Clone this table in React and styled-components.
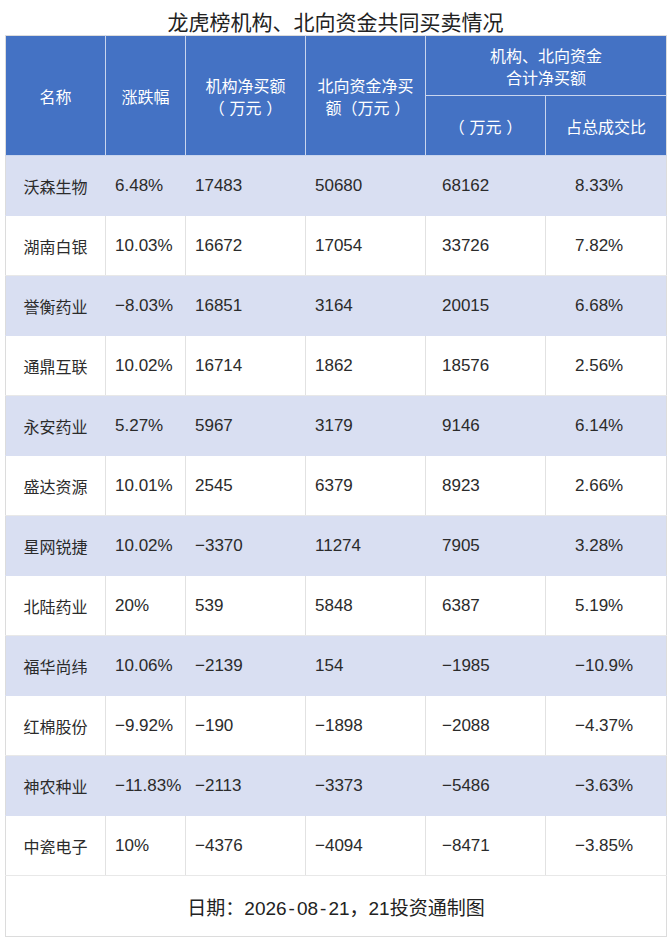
import React from "react";
import styled, { createGlobalStyle } from "styled-components";

const GlobalStyle = createGlobalStyle`
  html, body {
    margin: 0;
    padding: 0;
    background: #ffffff;
  }
  body {
    font-family: "Liberation Sans", "Noto Sans CJK SC", sans-serif;
    color: #2b2b2b;
  }
`;

const Page = styled.div`
  width: 670px;
  height: 940px;
  padding: 0 4px 0 5px;
  box-sizing: border-box;
  background: #fff;
`;

const Title = styled.h1`
  margin: 0;
  height: 35px;
  line-height: 42px;
  text-align: center;
  font-size: 21px;
  font-weight: normal;
  color: #222;
  font-family: "Noto Sans CJK SC", sans-serif;
`;

const Table = styled.table`
  width: 661px;
  border-collapse: collapse;
  table-layout: fixed;
  border: 1px solid #dcdcdc;
`;

const HeadCell = styled.th`
  height: 59px;
  padding: 0 4px;
  background: #4472c4;
  color: #ffffff;
  font-size: 16px;
  font-weight: normal;
  line-height: 22px;
  text-align: center;
  vertical-align: middle;
  border: 1px solid #c9d5ee;
  border-top: none;
  font-family: "Noto Sans CJK SC", sans-serif;
  &:first-child {
    border-left: none;
  }
  &:last-child {
    border-right: none;
  }
`;

/* full-width punctuation on a full em; shift nudges the glyph outward */
const Punct = styled.span`
  display: inline-block;
  width: 1em;
  text-align: center;
  position: relative;
  left: ${({ $shift }) => $shift || 0}em;
`;

const Row = styled.tr`
  background: ${({ $striped }) => ($striped ? "#d9dff2" : "#ffffff")};
`;

const Cell = styled.td`
  height: 59px;
  padding: 0 0 0 ${({ $pad }) => $pad}px;
  text-align: ${({ $align }) => $align || "left"};
  vertical-align: middle;
  font-size: 17px;
  color: #2b2b2b;
  border-left: 1px solid ${({ $striped }) => ($striped ? "#d9dff2" : "#e2e2e2")};
  border-bottom: 1px solid ${({ $striped }) => ($striped ? "#d9dff2" : "#e8e8e8")};
  white-space: nowrap;
  &:first-child {
    border-left: none;
  }
`;

const Name = styled.span`
  font-family: "Noto Sans CJK SC", sans-serif;
  font-size: 16px;
`;

const Footer = styled.td`
  height: 58px;
  text-align: center;
  vertical-align: middle;
  font-size: 19px;
  color: #222;
  border-top: 1px solid #e2e2e2;
  font-family: "Liberation Sans", "Noto Sans CJK SC", sans-serif;
`;

const Dash = styled.span`
  margin: 0 2px;
`;

const rows = [
  ["沃森生物", "6.48%", "17483", "50680", "68162", "8.33%"],
  ["湖南白银", "10.03%", "16672", "17054", "33726", "7.82%"],
  ["誉衡药业", "−8.03%", "16851", "3164", "20015", "6.68%"],
  ["通鼎互联", "10.02%", "16714", "1862", "18576", "2.56%"],
  ["永安药业", "5.27%", "5967", "3179", "9146", "6.14%"],
  ["盛达资源", "10.01%", "2545", "6379", "8923", "2.66%"],
  ["星网锐捷", "10.02%", "−3370", "11274", "7905", "3.28%"],
  ["北陆药业", "20%", "539", "5848", "6387", "5.19%"],
  ["福华尚纬", "10.06%", "−2139", "154", "−1985", "−10.9%"],
  ["红棉股份", "−9.92%", "−190", "−1898", "−2088", "−4.37%"],
  ["神农种业", "−11.83%", "−2113", "−3373", "−5486", "−3.63%"],
  ["中瓷电子", "10%", "−4376", "−4094", "−8471", "−3.85%"],
];

const cols = [
  { pad: 0, align: "center" },
  { pad: 9 },
  { pad: 9 },
  { pad: 9 },
  { pad: 16 },
  { pad: 29 },
];

const Unit = ({ open = -0.3 }) => (
  <>
    <Punct $shift={open}>（</Punct>万元<Punct $shift={0.3}>）</Punct>
  </>
);

export default function App() {
  return (
    <Page>
      <GlobalStyle />
      <Title>龙虎榜机构、北向资金共同买卖情况</Title>
      <Table>
        <colgroup>
          <col style={{ width: 100 }} />
          <col style={{ width: 80 }} />
          <col style={{ width: 120 }} />
          <col style={{ width: 120 }} />
          <col style={{ width: 120 }} />
          <col style={{ width: 121 }} />
        </colgroup>
        <thead>
          <tr>
            <HeadCell rowSpan={2}>名称</HeadCell>
            <HeadCell rowSpan={2}>涨跌幅</HeadCell>
            <HeadCell rowSpan={2}>
              机构净买额
              <br />
              <Unit />
            </HeadCell>
            <HeadCell rowSpan={2}>
              北向资金净买
              <br />额<Unit open={0} />
            </HeadCell>
            <HeadCell colSpan={2}>
              机构<Punct>、</Punct>北向资金
              <br />
              合计净买额
            </HeadCell>
          </tr>
          <tr>
            <HeadCell>
              <Unit />
            </HeadCell>
            <HeadCell>占总成交比</HeadCell>
          </tr>
        </thead>
        <tbody>
          {rows.map((r, i) => {
            const striped = i % 2 === 0;
            return (
              <Row key={r[0]} $striped={striped}>
                {r.map((v, j) => (
                  <Cell
                    key={j}
                    $striped={striped}
                    $pad={cols[j].pad}
                    $align={cols[j].align}
                  >
                    {j === 0 ? <Name>{v}</Name> : v}
                  </Cell>
                ))}
              </Row>
            );
          })}
          <tr>
            <Footer colSpan={6}>
              日期<Punct>：</Punct>2026<Dash>-</Dash>08<Dash>-</Dash>21
              <Punct>，</Punct>21投资通制图
            </Footer>
          </tr>
        </tbody>
      </Table>
    </Page>
  );
}
